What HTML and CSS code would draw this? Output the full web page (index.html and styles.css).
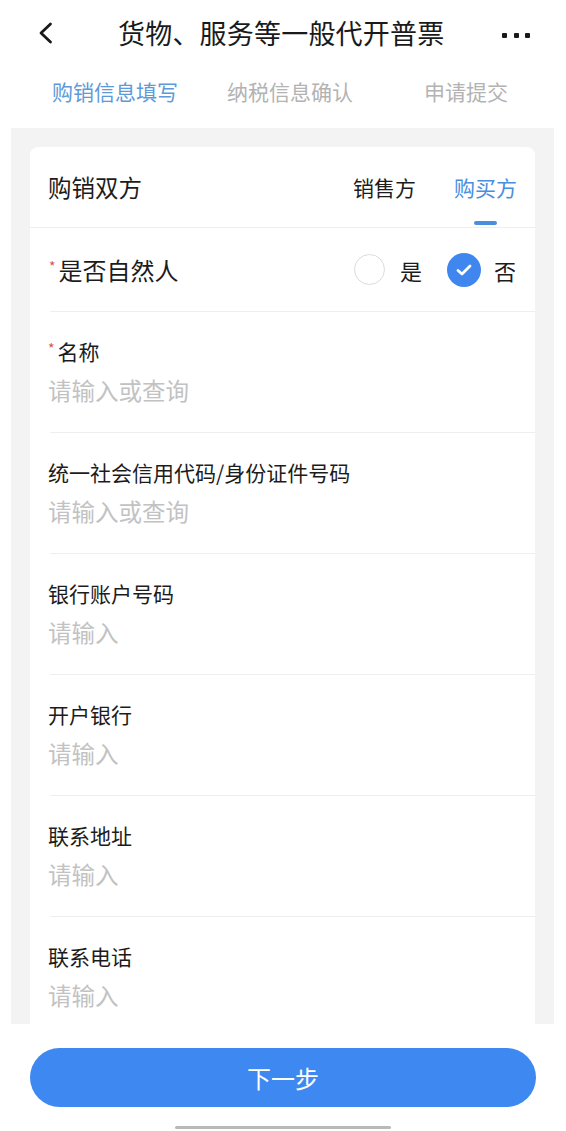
FILE: index.html
```html
<!DOCTYPE html>
<html lang="zh">
<head>
<meta charset="utf-8">
<title>货物、服务等一般代开普票</title>
<link rel="stylesheet" href="styles.css">
</head>
<body>
<div class="page">
  <header class="topbar">
    <svg class="back" width="16" height="22" viewBox="0 0 16 22"><polyline points="12.5,2 3,11 12.5,20" fill="none" stroke="#1a1a1a" stroke-width="2.8" stroke-linecap="round" stroke-linejoin="round"/></svg>
    <h1 class="title">货物、服务等一般代开普票</h1>
    <div class="more"><span></span><span></span><span></span></div>
  </header>
  <nav class="steps">
    <span class="step active">购销信息填写</span>
    <span class="step s2">纳税信息确认</span>
    <span class="step s3">申请提交</span>
  </nav>
  <main class="main">
    <section class="card">
      <div class="card-head">
        <span class="card-title">购销双方</span>
        <div class="tabs">
          <span class="tab">销售方</span>
          <span class="tab active">购买方</span>
        </div>
      </div>
      <div class="radio-row">
        <span class="label big"><i class="req">*</i>是否自然人</span>
        <div class="radios">
          <span class="circle"></span><span class="opt">是</span>
          <span class="circle checked"><svg width="18" height="14" viewBox="0 0 18 14"><polyline points="3,7.5 7,11 15,3" fill="none" stroke="#fff" stroke-width="2.8" stroke-linecap="round" stroke-linejoin="round"/></svg></span><span class="opt">否</span>
        </div>
      </div>
      <div class="field">
        <div class="label"><i class="req">*</i>名称</div>
        <div class="ph">请输入或查询</div>
      </div>
      <div class="field">
        <div class="label">统一社会信用代码/身份证件号码</div>
        <div class="ph">请输入或查询</div>
      </div>
      <div class="field">
        <div class="label">银行账户号码</div>
        <div class="ph">请输入</div>
      </div>
      <div class="field">
        <div class="label">开户银行</div>
        <div class="ph">请输入</div>
      </div>
      <div class="field">
        <div class="label">联系地址</div>
        <div class="ph">请输入</div>
      </div>
      <div class="field">
        <div class="label">联系电话</div>
        <div class="ph">请输入</div>
      </div>
    </section>
  </main>
  <footer class="footer">
    <button class="next">下一步</button>
    <div class="home-bar"></div>
  </footer>
</div>
</body>
</html>
```

FILE: styles.css
```css
* { box-sizing: border-box; }
html, body { margin: 0; padding: 0; background: #fff; }
body {
  font-family: "Noto Sans CJK SC", "Noto Sans", sans-serif;
  color: #1c1c1c;
}
.page { width: 566px; height: 1131px; overflow: hidden; display: flex; flex-direction: column; }

.topbar {
  height: 66px;
  display: flex;
  align-items: center;
  padding: 0 0 0 38px;
}
.back { display: block; }
.title {
  margin: 0 0 0 64px;
  font-size: 27px;
  font-weight: 400;
  line-height: 36px;
  color: #1a1a1a;
  letter-spacing: 0.2px;
}
.more { display: flex; gap: 6.5px; margin-left: 58px; margin-top: 4px; }
.more span { width: 5px; height: 5px; background: #1a1a1a; border-radius: 1px; }

.steps {
  height: 62px;
  padding: 0 0 12px 52px;
  display: flex;
  align-items: center;
  font-size: 21px;
  color: #b3b3b3;
}
.step { line-height: 30px; }
.step.active { color: #5c9ad8; }
.step.s2 { margin-left: 49px; }
.step.s3 { margin-left: 71px; }

.main {
  margin: 0 12px 0 11px;
  height: 896px;
  background: #f3f3f4;
  padding: 19px 19px 0 19px;
  overflow: hidden;
}
.card {
  background: #fff;
  border-radius: 8px 8px 0 0;
}
.card-head {
  height: 81px;
  border-bottom: 1px solid #eeeeee;
  display: flex;
  align-items: center;
  justify-content: space-between;
  padding: 0 18px;
}
.card-title { font-size: 23.5px; line-height: 32px; color: #1c1c1c; }
.tabs { display: flex; height: 80px; gap: 38px; }
.tab {
  position: relative;
  display: flex;
  align-items: center;
  font-size: 21px;
  color: #1c1c1c;
}
.tab.active { color: #4a8ee0; }
.tab.active::after {
  content: "";
  position: absolute;
  bottom: 2px;
  left: 50%;
  width: 23px;
  height: 4px;
  margin-left: -11.5px;
  border-radius: 2px;
  background: #4a8ee0;
}

.radio-row {
  height: 84px;
  margin-left: 20px;
  border-bottom: 1px solid #eeeeee;
  display: flex;
  align-items: center;
  justify-content: space-between;
  padding: 0 19px 0 0;
}
.label {
  font-size: 21px;
  line-height: 30px;
  height: 30px;
  color: #1c1c1c;
  margin-left: -2px;
}
.label.big { font-size: 24px; line-height: 32px; height: 32px; }
.req {
  font-style: normal;
  color: #d9534f;
  font-size: 14px;
  line-height: 0;
  position: relative;
  top: -6px;
  margin-right: 3px;
}
.label.big .req { top: -8px; margin-right: 3px; margin-left: 1px; }
.radios { display: flex; align-items: center; }
.circle {
  width: 31px;
  height: 31px;
  border-radius: 50%;
  border: 1.5px solid #dcdcdc;
  display: flex;
  align-items: center;
  justify-content: center;
}
.circle.checked {
  width: 34px;
  height: 34px;
  border: none;
  background: #3f86ee;
  margin-left: 25px;
}
.opt { font-size: 22px; line-height: 30px; margin-left: 15px; color: #1c1c1c; }
.checked + .opt { margin-left: 13px; }

.field {
  margin-left: 20px;
  border-bottom: 1px solid #eeeeee;
  padding: 24px 0 27px 0;
}
.ph {
  margin-top: 9px;
  margin-left: -2px;
  font-size: 23.5px;
  line-height: 30px;
  color: #c2c2c2;
}

.footer {
  flex: 1;
  background: #fff;
  display: flex;
  flex-direction: column;
  align-items: center;
}
.next {
  margin-top: 24px;
  width: 506px;
  height: 59px;
  border: none;
  border-radius: 30px;
  background: #3e88f1;
  color: #fff;
  font-family: "Noto Sans CJK SC", "Noto Sans", sans-serif;
  font-size: 24px;
  line-height: 30px;
}
.home-bar {
  margin-top: 19px;
  width: 216px;
  height: 3px;
  border-radius: 2px;
  background: #b9b9b9;
}
```
